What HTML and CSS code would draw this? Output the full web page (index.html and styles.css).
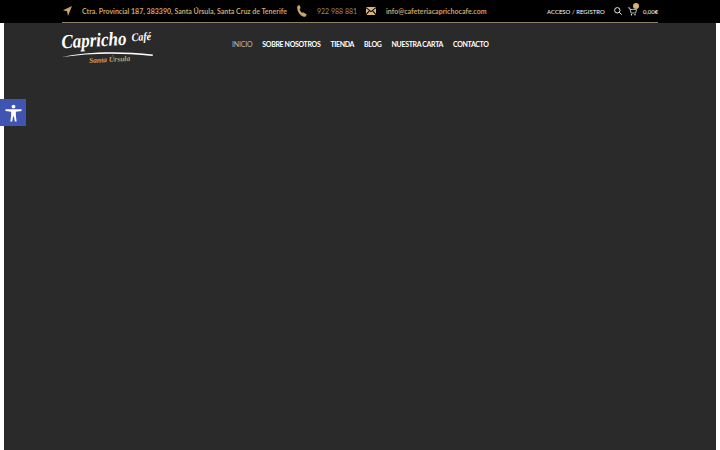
FILE: index.html
```html
<!DOCTYPE html>
<html lang="es">
  <head>
    <meta charset="UTF-8" />
    <meta name="viewport" content="width=device-width, initial-scale=1.0" />
    <title>Capricho Café</title>
    <link rel="stylesheet" href="styles.css">
  </head>

  <body>
    <div class="topbar">
      <div class="topbar-inner">
        <div class="contact">
          <svg class="ico-loc" width="9" height="10" viewBox="0 0 9 10"><path d="M9 0 0 4.200l4 1L5 10z" fill="#c9a468"/></svg>
          <span class="address">Ctra. Provincial 187, 383390, Santa Úrsula, Santa Cruz de Tenerife</span>
          <svg class="ico-phone" width="10" height="12" viewBox="0 0 10 12"><path d="M.3 1 2.400 0l1.300 3-1 1c.2 1.500 1 2.800 2.300 3.800l1.200-.6L9.800 9.600 8.400 11.800C4 12.200-.6 6.500.3 1z" fill="#c9a468"/></svg>
          <span class="phone">922 988 881</span>
          <svg class="ico-mail" width="10" height="8" viewBox="0 0 10 8"><path d="M0 0h10L5 4zM0 1.200 3 3.600 0 6.800zM10 1.200 7 3.600l3 3.200zM3.700 4.200 5 5.200l1.300-1L9.600 8H.4z" fill="#d8b77f"/></svg>
          <span class="email">info@cafeteriacaprichocafe.com</span>
        </div>
        <div class="account">
          <a href="#" class="login">ACCESO / REGISTRO</a>
          <svg class="ico-search" width="8" height="8" viewBox="0 0 8 8"><circle cx="3.300" cy="3.300" r="2.700" fill="none" stroke="#fff" stroke-width=".9"/><path d="M5.300 5.300 7.700 7.700" stroke="#fff" stroke-width=".9"/></svg>
          <span class="cart">
            <svg width="9" height="9" viewBox="0 0 9 9"><path d="M0 .8h1.600L3 6h4.600L8.600 2.400H2" fill="none" stroke="#fff" stroke-width=".7"/><circle cx="3.500" cy="7.800" r=".7" fill="#fff"/><circle cx="7" cy="7.800" r=".7" fill="#fff"/></svg>
            <span class="cart-badge"></span>
          </span>
          <span class="total">0,00€</span>
        </div>
      </div>
    </div>

    <main class="page">
      <header class="header">
        <a href="#" class="logo">
          <span class="logo-name">Capricho <small>Café</small></span>
          <svg class="logo-swash" width="91" height="8" viewBox="0 0 91 8"><path d="M0 7C22 2 55 .5 91 4.500L90.500 6C58 2.500 28 3 0 7z" fill="#fff"/></svg>
          <span class="logo-place">Santa Úrsula</span>
        </a>
        <nav class="nav">
          <a href="#" class="active">INICIO</a>
          <a href="#">SOBRE NOSOTROS</a>
          <a href="#">TIENDA</a>
          <a href="#">BLOG</a>
          <a href="#">NUESTRA CARTA</a>
          <a href="#">CONTACTO</a>
        </nav>
      </header>
    </main>

    <a href="#" class="a11y">
      <svg width="17" height="18" viewBox="0 0 18 18"><circle cx="9" cy="2.200" r="2" fill="#fff"/><path d="M.5 5h17v1.800l-6 1V12l.8 6h-1.900L9.500 12.800h-1L7.600 18H5.700l.8-6V7.800l-6-1z" fill="#fff"/></svg>
    </a>
  </body>
</html>
```

FILE: styles.css
```css
* {
  box-sizing: border-box;
}

html,
body {
  height: 100%;
}

body {
  display: flex;
  flex-direction: column;
  margin: 0;
  background-color: #fff;
  color: #fff;
  font-family: "Lato", "Liberation Sans", sans-serif;
  overflow: hidden;
}

a {
  color: inherit;
  text-decoration: none;
}

.topbar {
  flex: none;
  height: 23px;
  padding: 0 62px;
  background-color: #000;
}

.topbar-inner {
  display: flex;
  align-items: center;
  justify-content: space-between;
  height: 23px;
  border-bottom: 1px solid #8f7f63;
}

.contact {
  display: flex;
  align-items: center;
  font-size: 7px;
  font-weight: 700;
  color: #c9a468;
  white-space: nowrap;
}

.ico-loc {
  margin-left: 1px;
  margin-right: 10px;
}

.ico-phone,
.ico-mail {
  margin: 0 10px;
}

.address {
  width: 205px;
  letter-spacing: 0.01px;
}

.phone {
  width: 39px;
  font-weight: 400;
  color: #a08a62;
}

.email {
  width: 101px;
  letter-spacing: 0.03px;
}

.account {
  display: flex;
  align-items: center;
  font-size: 6px;
  white-space: nowrap;
}

.login {
  width: 58px;
}

.ico-search {
  margin-left: 9px;
}

.cart {
  position: relative;
  display: flex;
  margin-left: 6px;
}

.cart-badge {
  position: absolute;
  top: -4px;
  left: 5px;
  width: 6px;
  height: 6px;
  border-radius: 50%;
  background-color: #d9b26e;
}

.total {
  width: 15px;
  margin-left: 6px;
}

.page {
  flex: 1;
  margin: 0 4px;
  background-color: #2a2a2a;
}

.header {
  display: flex;
  align-items: flex-start;
  padding: 10px 58px 0;
}

.logo {
  display: flex;
  flex-direction: column;
  align-items: flex-start;
  width: 91px;
  flex: none;
}

.logo-name {
  font-family: "Liberation Serif", serif;
  font-style: italic;
  font-weight: bold;
  font-size: 17px;
  line-height: 20px;
  white-space: nowrap;
  transform: rotate(-3deg) scaleY(1.15);
  transform-origin: left bottom;
}

.logo-name small {
  font-size: 10px;
  margin-left: 1px;
  vertical-align: 3px;
}

.logo-swash {
  margin-top: -4px;
}

.logo-place {
  margin: -3px 0 0 27px;
  font-family: "Liberation Serif", serif;
  font-style: italic;
  font-weight: bold;
  font-size: 7.500px;
  color: #c9a468;
  white-space: nowrap;
  transform: rotate(-3deg);
}

.nav {
  display: flex;
  gap: 10px;
  margin-left: 79px;
  padding-top: 7px;
  font-size: 7px;
  font-weight: 700;
  letter-spacing: -0.34px;
  white-space: nowrap;
}

.nav .active {
  font-weight: 400;
  letter-spacing: -0.2px;
  color: #bdbdbd;
}

.a11y {
  position: absolute;
  top: 99px;
  left: 0;
  display: flex;
  align-items: center;
  justify-content: center;
  width: 26px;
  height: 27px;
  background-color: #4054b2;
}
```
